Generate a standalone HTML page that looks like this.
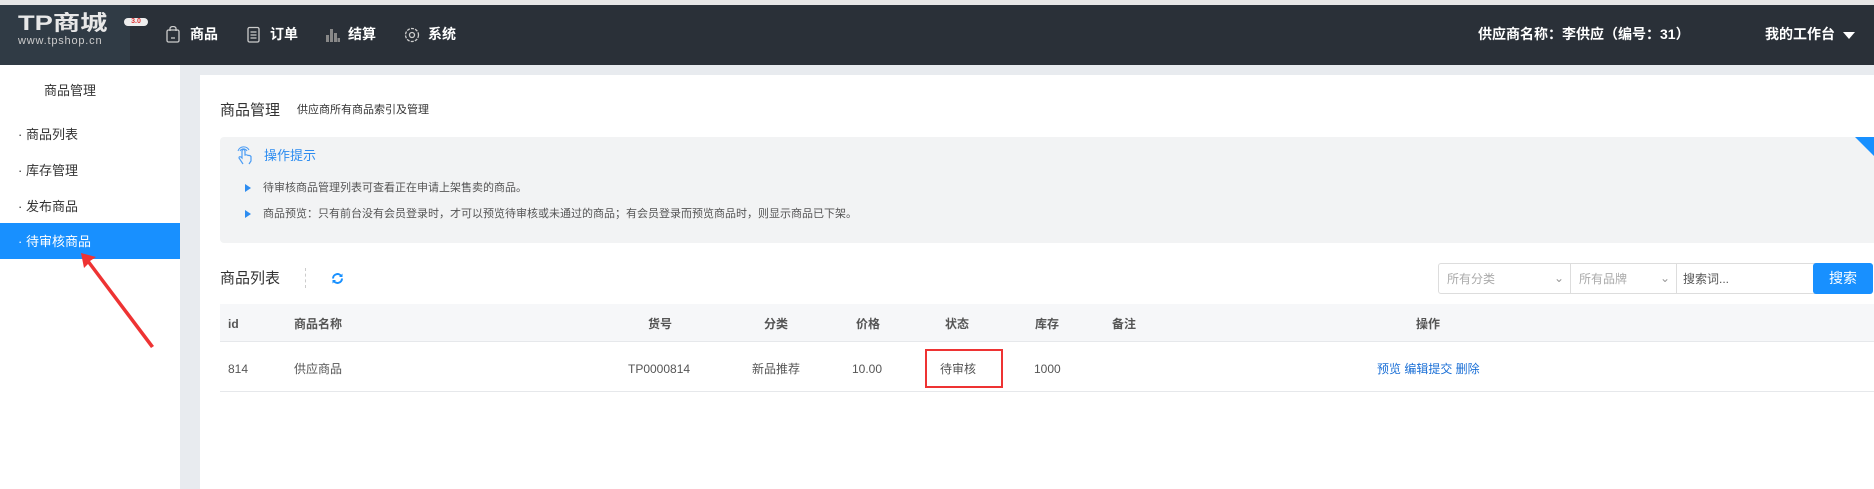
<!DOCTYPE html>
<html><head><meta charset="utf-8"><style>
*{margin:0;padding:0;box-sizing:border-box}
body{width:1874px;height:489px;overflow:hidden;background:#fff;font-family:"Liberation Sans","Noto Sans CJK SC",sans-serif;position:relative;color:#333}
.a{position:absolute;white-space:nowrap;line-height:1.2}
.r{font-size:12px;color:#555;top:360px;line-height:18px;height:18px}
.h{font-size:12px;font-weight:bold;color:#555;top:315px;line-height:18px;height:18px}
</style></head><body>
<div class="a" style="left:0;top:0;width:1874px;height:5px;background:#e6e6e6"></div>
<div class="a" style="left:0;top:5px;width:1874px;height:60px;background:#2a3038"></div>
<div class="a" style="left:0;top:5px;width:130px;height:60px;background:#303b45"></div>
<div class="a" style="left:18px;top:13px;font-size:21px;line-height:22px;font-weight:bold;color:#e8e8e8;transform:scaleX(1.3);transform-origin:left top">TP商城</div>
<div class="a" style="left:124px;top:18px;width:24px;height:8px;background:#eee;border-radius:4px;font-size:7px;color:#d33;text-align:center;line-height:8px;font-weight:bold">3.0</div>
<div class="a" style="left:18px;top:36px;font-size:11px;line-height:11px;color:#ccc;letter-spacing:0.8px">www.tpshop.cn</div>
<svg class="a" style="left:166px;top:26px" width="14" height="17" viewBox="0 0 14 17"><rect x="1" y="4" width="12" height="12" rx="1.5" fill="none" stroke="#ccc" stroke-width="1.3"/><path d="M4 5V2.5a3 2 0 0 1 6 0V5M5 12h4" fill="none" stroke="#ccc" stroke-width="1.3"/></svg>
<div class="a" style="left:190px;top:26px;font-size:14px;font-weight:bold;color:#fff">商品</div>
<svg class="a" style="left:247px;top:26px" width="13" height="17" viewBox="0 0 13 17"><rect x="1" y="1.5" width="11" height="14.5" rx="1.5" fill="none" stroke="#ccc" stroke-width="1.3"/><path d="M3.5 6h6M3.5 9h6M3.5 12h6" stroke="#ccc" stroke-width="1.2"/></svg>
<div class="a" style="left:270px;top:26px;font-size:14px;font-weight:bold;color:#fff">订单</div>
<svg class="a" style="left:326px;top:27px" width="14" height="15" viewBox="0 0 14 15"><rect x="0" y="8" width="3" height="7" fill="#888"/><rect x="4" y="2" width="3" height="13" fill="#888"/><rect x="8" y="6" width="3" height="9" fill="#888"/><rect x="11.5" y="11" width="2.5" height="4" fill="#888"/></svg>
<div class="a" style="left:348px;top:26px;font-size:14px;font-weight:bold;color:#fff">结算</div>
<svg class="a" style="left:404px;top:27px" width="16" height="16" viewBox="0 0 16 16"><circle cx="8" cy="8" r="6.5" fill="none" stroke="#ccc" stroke-width="1.3" stroke-dasharray="3 1.2"/><circle cx="8" cy="8" r="2.5" fill="none" stroke="#ccc" stroke-width="1.3"/></svg>
<div class="a" style="left:428px;top:26px;font-size:14px;font-weight:bold;color:#fff">系统</div>
<div class="a" style="left:1478px;top:26px;font-size:14px;font-weight:bold;color:#fff">供应商名称：李供应（编号：31）</div>
<div class="a" style="left:1765px;top:26px;font-size:14px;font-weight:bold;color:#fff">我的工作台</div>
<div class="a" style="left:1843px;top:32px;border-left:6px solid transparent;border-right:6px solid transparent;border-top:7px solid #fff"></div>

<div class="a" style="left:180px;top:65px;width:1694px;height:424px;background:#e8ebef"></div>
<div class="a" style="left:200px;top:75px;width:1674px;height:414px;background:#fff"></div>

<div class="a" style="left:44px;top:83px;font-size:13px;color:#333">商品管理</div>
<div class="a" style="left:18px;top:127px;font-size:13px;color:#333">· 商品列表</div>
<div class="a" style="left:18px;top:163px;font-size:13px;color:#333">· 库存管理</div>
<div class="a" style="left:18px;top:199px;font-size:13px;color:#333">· 发布商品</div>
<div class="a" style="left:0;top:223px;width:180px;height:36px;background:#1890ff"></div>
<div class="a" style="left:18px;top:234px;font-size:13px;color:#fff">· 待审核商品</div>
<svg class="a" style="left:0;top:0" width="200" height="489"><path d="M154 346 L90 261 L96 257 L81 253 L84 268 L88 264 L151 348Z" fill="#ee3333"/></svg>

<div class="a" style="left:220px;top:102px;font-size:15px;color:#333">商品管理</div>
<div class="a" style="left:297px;top:104px;font-size:11px;color:#333">供应商所有商品索引及管理</div>

<div class="a" style="left:220px;top:137px;width:1654px;height:106px;background:#f2f3f4;border-radius:4px 0 0 4px"></div>
<div class="a" style="left:1855px;top:137px;border-top:19px solid #1890ff;border-left:19px solid transparent"></div>
<svg class="a" style="left:236px;top:145px" width="18" height="21" viewBox="0 0 18 21"><path d="M7 19 L3 13 Q3 11 5 12 L6 13 V6 Q6 4.5 7.5 4.5 Q9 4.5 9 6 V10 Q11 9.5 12 10.5 Q14 10 15 11.5 V16 L13 19" fill="none" stroke="#4a9cf5" stroke-width="1.2"/><path d="M4 6 A4 4 0 0 1 11 6 M2 6 A6 6 0 0 1 13 5" fill="none" stroke="#4a9cf5" stroke-width="1"/></svg>
<div class="a" style="left:264px;top:148px;font-size:13px;color:#2d8cf0">操作提示</div>
<div class="a" style="left:245px;top:184px;border-left:6px solid #2d8cf0;border-top:4px solid transparent;border-bottom:4px solid transparent"></div>
<div class="a" style="left:263px;top:182px;font-size:11px;color:#555">待审核商品管理列表可查看正在申请上架售卖的商品。</div>
<div class="a" style="left:245px;top:210px;border-left:6px solid #2d8cf0;border-top:4px solid transparent;border-bottom:4px solid transparent"></div>
<div class="a" style="left:263px;top:208px;font-size:11px;color:#555">商品预览：只有前台没有会员登录时，才可以预览待审核或未通过的商品；有会员登录而预览商品时，则显示商品已下架。</div>

<div class="a" style="left:220px;top:270px;font-size:15px;color:#333">商品列表</div>
<div class="a" style="left:305px;top:268px;height:20px;border-left:1px dashed #ccc"></div>
<svg class="a" style="left:331px;top:272px" width="13" height="13" viewBox="0 0 13 13"><path d="M2 6.5 A4.5 4.5 0 0 1 10.5 4.5 M11 6.5 A4.5 4.5 0 0 1 2.5 8.5" fill="none" stroke="#1890ff" stroke-width="2"/><path d="M11.5 1.5 V5 H8Z M1.5 11.5 V8 H5Z" fill="#1890ff"/></svg>

<div class="a" style="left:1438px;top:263px;width:133px;height:31px;border:1px solid #ddd;border-radius:3px 0 0 3px;font-size:12px;color:#aaa;padding:8px 8px">所有分类<span style="position:absolute;right:6px;top:7px;color:#999">⌄</span></div>
<div class="a" style="left:1570px;top:263px;width:107px;height:31px;border:1px solid #ddd;font-size:12px;color:#aaa;padding:8px 8px">所有品牌<span style="position:absolute;right:6px;top:7px;color:#999">⌄</span></div>
<div class="a" style="left:1676px;top:263px;width:140px;height:31px;border:1px solid #ddd;font-size:12px;color:#555;padding:8px 6px">搜索词...</div>
<div class="a" style="left:1813px;top:263px;width:60px;height:31px;background:#1890ff;border-radius:3px;font-size:14px;color:#fff;text-align:center;line-height:31px">搜索</div>

<div class="a" style="left:220px;top:304px;width:1654px;height:38px;background:#f6f7f9;border-bottom:1px solid #e6e8eb"></div>
<div class="a" style="left:220px;top:391px;width:1654px;height:1px;background:#e6e8eb"></div>
<div class="a h" style="left:228px">id</div>
<div class="a h" style="left:294px">商品名称</div>
<div class="a h" style="left:648px">货号</div>
<div class="a h" style="left:764px">分类</div>
<div class="a h" style="left:856px">价格</div>
<div class="a h" style="left:945px">状态</div>
<div class="a h" style="left:1035px">库存</div>
<div class="a h" style="left:1112px">备注</div>
<div class="a h" style="left:1416px">操作</div>

<div class="a r" style="left:228px">814</div>
<div class="a r" style="left:294px">供应商品</div>
<div class="a r" style="left:628px">TP0000814</div>
<div class="a r" style="left:752px">新品推荐</div>
<div class="a r" style="left:852px">10.00</div>
<div class="a" style="left:925px;top:349px;width:78px;height:39px;border:2px solid #ee3333"></div>
<div class="a r" style="left:940px">待审核</div>
<div class="a r" style="left:1034px">1000</div>
<div class="a r" style="left:1377px;color:#1a6fd6">预览 编辑提交 删除</div>
</body></html>
